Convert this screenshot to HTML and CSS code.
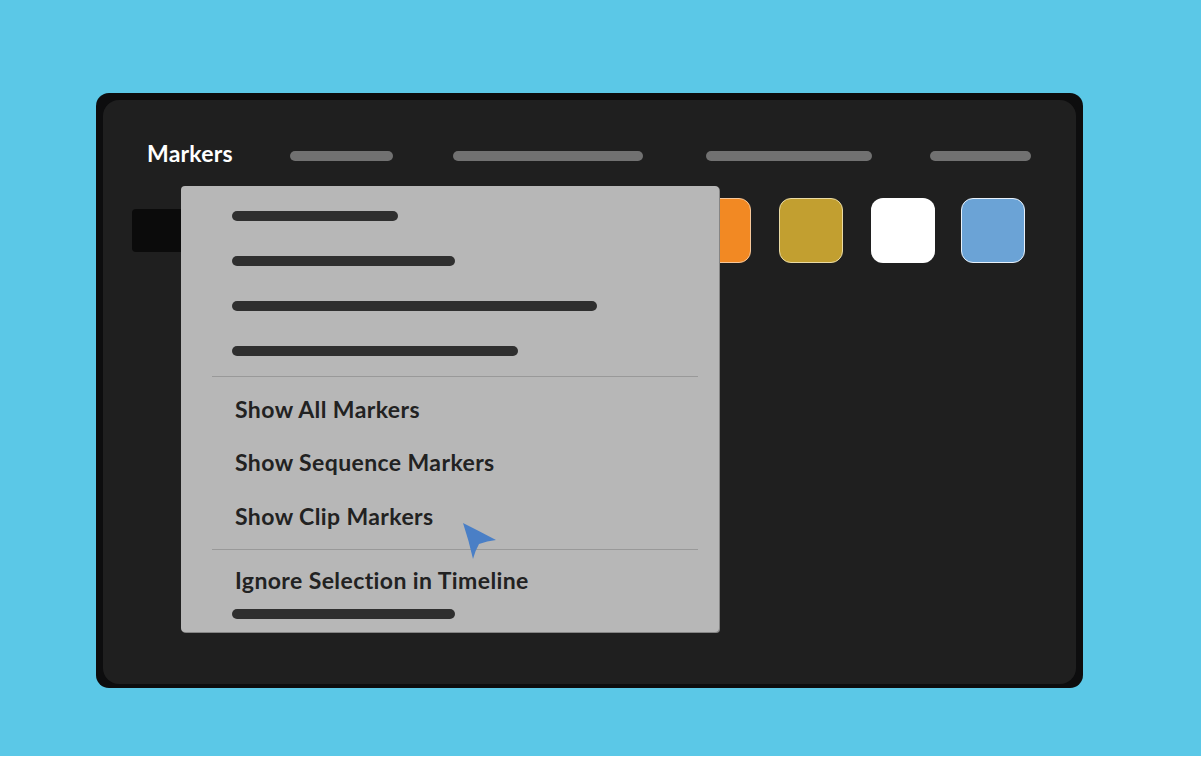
FILE: index.html
```html
<!DOCTYPE html>
<html>
    <head>
        <meta charset="UTF-8">
        <meta name="viewport" content="width=device-width, initial-scale=1.0">
        <title>Markers</title>
        <link rel="stylesheet" href="styles.css">
    </head>

    <body>
        <div class="stage">
            <div class="panel">
                <div class="panel-inner">
                    <div class="header">
                        <span class="title">Markers</span>
                        <span class="pill pill-1"></span>
                        <span class="pill pill-2"></span>
                        <span class="pill pill-3"></span>
                        <span class="pill pill-4"></span>
                    </div>

                    <div class="toolbar">
                        <div class="field"></div>
                        <div class="swatches">
                            <span class="swatch orange"></span>
                            <span class="swatch gold"></span>
                            <span class="swatch white"></span>
                            <span class="swatch blue"></span>
                        </div>
                    </div>

                    <div class="menu">
                        <div class="menu-bars">
                            <div class="bar-row"><span class="bar" style="width: 166px"></span></div>
                            <div class="bar-row"><span class="bar" style="width: 223px"></span></div>
                            <div class="bar-row"><span class="bar" style="width: 365px"></span></div>
                            <div class="bar-row"><span class="bar" style="width: 286px"></span></div>
                        </div>
                        <hr class="separator">
                        <ul class="menu-list">
                            <li>Show All Markers</li>
                            <li>Show Sequence Markers</li>
                            <li>Show Clip Markers</li>
                        </ul>
                        <hr class="separator">
                        <ul class="menu-list last">
                            <li>Ignore Selection in Timeline</li>
                        </ul>
                        <div class="bar-row small"><span class="bar" style="width: 223px"></span></div>
                    </div>

                    <svg class="cursor" width="36" height="40" viewBox="0 0 36 40">
                        <path d="M1 1 Q17 9 34 18 Q25 19 17 22 Q13 29 11 37 Q7 19 1 1 Z" fill="#4a7fc6"/>
                    </svg>
                </div>
            </div>
        </div>
    </body>
</html>
```

FILE: styles.css
```css
html {
    background-color: #ffffff;
}
body {
    margin: 0;
    font-family: Lato, "Open Sans", sans-serif;
}
.stage {
    height: 756px;
    background-color: #5bc8e7;
    padding: 93px 0 0 96px;
    box-sizing: border-box;
}
.panel {
    width: 987px;
    height: 595px;
    box-sizing: border-box;
    background-color: #0d0d0e;
    border-radius: 13px;
    padding: 7px 7px 4px 7px;
}
.panel-inner {
    position: relative;
    height: 100%;
    background-color: #1f1f1f;
    border-radius: 16px;
}

/* header */
.header {
    display: flex;
    align-items: center;
    height: 112px;
    padding-left: 44px;
}
.title {
    flex: 0 0 143px;
    color: #ffffff;
    font-size: 23px;
    font-weight: 700;
    letter-spacing: 0.2px;
    margin-top: -6px;
}
.pill {
    height: 10px;
    border-radius: 5px;
    background-color: #717171;
}
.pill-1 { width: 103px; }
.pill-2 { width: 190px; margin-left: 60px; }
.pill-3 { width: 166px; margin-left: 63px; }
.pill-4 { width: 101px; margin-left: 58px; }

/* toolbar */
.toolbar {
    display: flex;
    align-items: center;
    padding-left: 29px;
    margin-top: -14px;
}
.field {
    width: 520px;
    height: 43px;
    border-radius: 4px;
    background-color: #0b0b0b;
}
.swatches {
    display: flex;
    gap: 28px;
    margin-left: 35px;
}
.swatch {
    width: 62px;
    height: 63px;
    border-radius: 12px;
    border: 1px solid transparent;
}
.swatch.orange { background-color: #f28923; border-color: #f7c79a; }
.swatch.gold { background-color: #c29f30; border-color: #eadba4; }
.swatch.white { background-color: #ffffff; }
.swatch.blue { background-color: #6ba3d6; border-color: #e8f1fa; margin-left: -2px; }

/* dropdown menu */
.menu {
    position: absolute;
    left: 78px;
    top: 86px;
    width: 538px;
    height: 446px;
    box-sizing: border-box;
    background-color: #b7b7b7;
    border-radius: 4px;
    box-shadow: 1px 1px 0 #858585;
    padding-top: 7px;
}
.bar-row {
    height: 45px;
    display: flex;
    align-items: center;
    padding-left: 51px;
}
.bar-row.small {
    height: 15px;
}
.bar {
    height: 10px;
    border-radius: 5px;
    background-color: #2f2f2f;
}
.separator {
    border: none;
    height: 1px;
    background-color: #999999;
    margin: 3px 21px 0 31px;
}
.menu-list + .separator {
    margin-top: 6px;
}
.menu-list {
    list-style: none;
    margin: 0;
    padding: 6px 0 0 54px;
}
.menu-list li {
    height: 53px;
    line-height: 53px;
    font-size: 23px;
    font-weight: 700;
    letter-spacing: 0.4px;
    color: #222222;
}
.menu-list li:nth-child(3) {
    padding-top: 1px;
}
.menu-list.last {
    padding-top: 5px;
}
.menu-list.last li {
    height: 51px;
    line-height: 51px;
}
.cursor {
    position: absolute;
    left: 359px;
    top: 422px;
}
```
